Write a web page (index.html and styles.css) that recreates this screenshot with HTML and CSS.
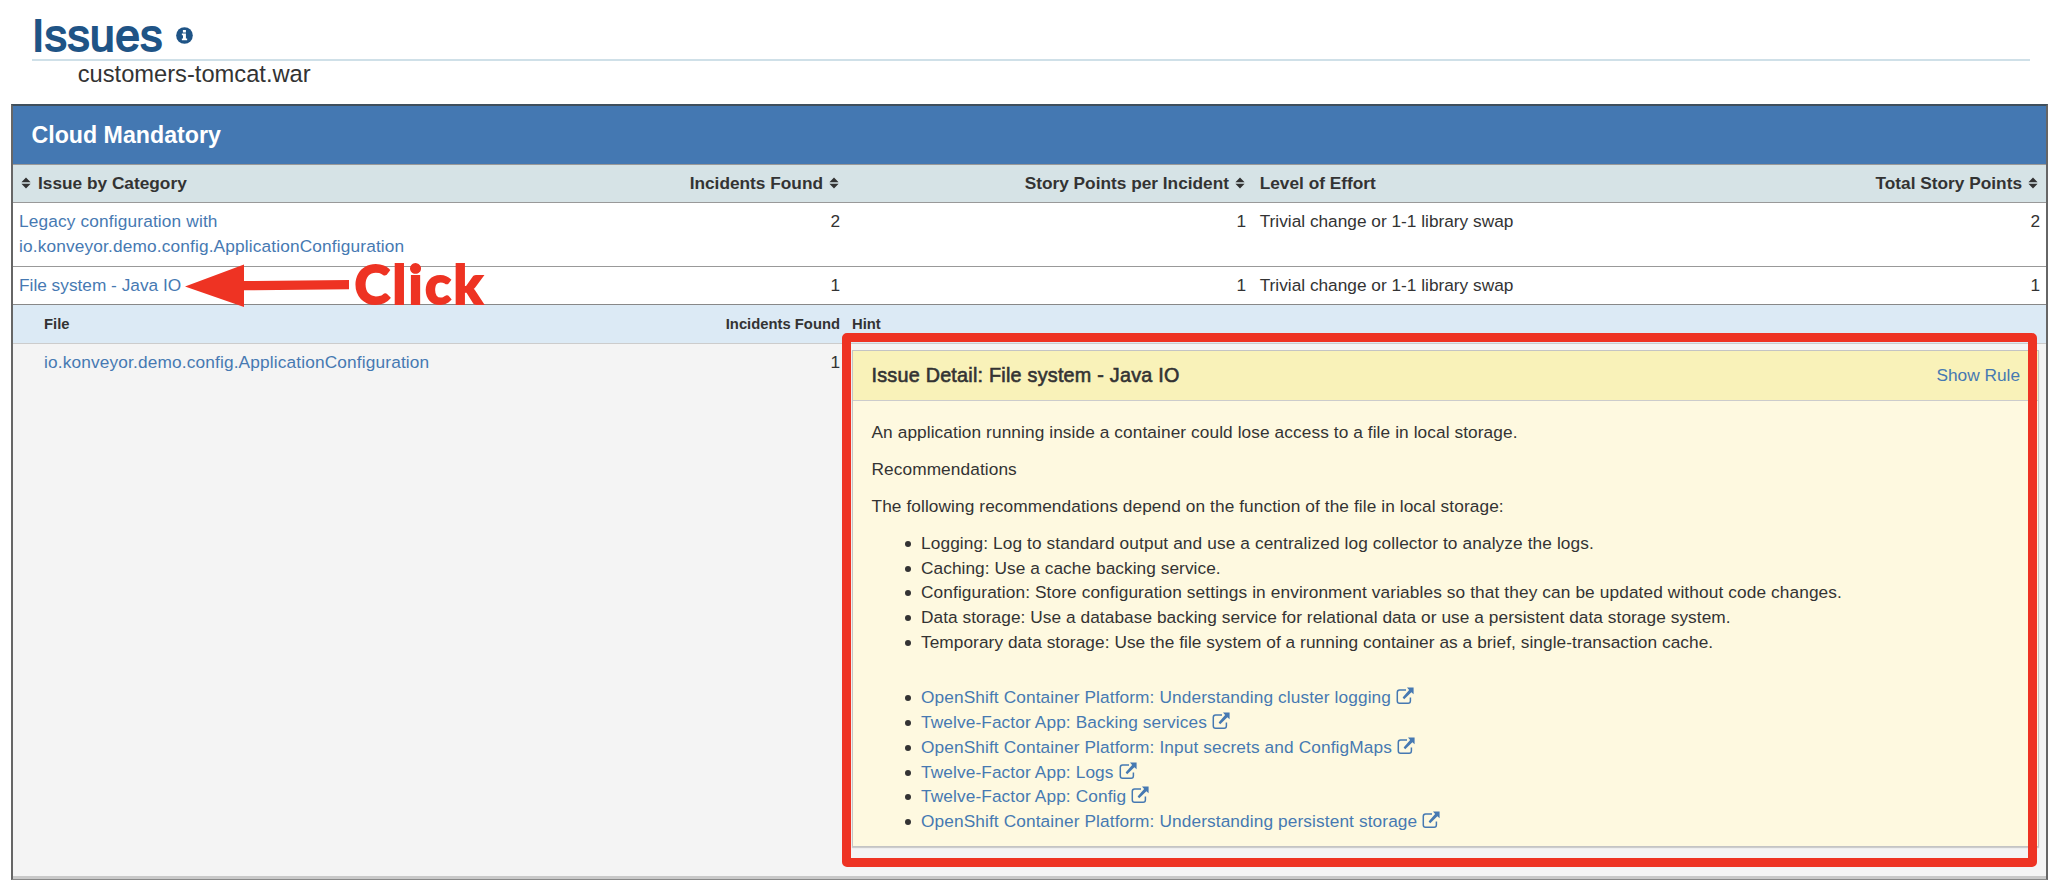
FILE: index.html
```
<!DOCTYPE html>
<html lang="en">
<head>
<meta charset="utf-8">
<title>Issues</title>
<link rel="stylesheet" href="styles.css">
</head>
<body>
<svg class="defs" aria-hidden="true">
  <symbol id="ext" viewBox="0 0 18 18"><path d="M10 2.9H3.6Q1.3 2.9 1.3 5.2V14Q1.3 16.3 3.6 16.3H12.1Q14.4 16.3 14.4 14V10.6" fill="none" stroke="currentColor" stroke-width="1.5"/><path d="M11 0.5H17.6V7.3L15.4 5.2L8.2 12.2L6.6 10.6L13.1 2.9Z" fill="currentColor"/></symbol>
  <symbol id="sort" viewBox="0 0 10 12"><path d="M5 .6L9.6 5.3H.4ZM5 11.4L9.6 6.7H.4Z" fill="currentColor"/></symbol>
</svg>
<header class="page-header">
  <h1 class="title">Issues</h1>
  <svg class="info" viewBox="0 0 18 18"><circle cx="9" cy="9" r="8.8" fill="#1f5486"/><path d="M7.3 3.2H10.5V5.7H7.3ZM6.2 7H10.5V12.2H11.8V14H6.2V12.2H7.4V8.8H6.2Z" fill="#fff"/></svg>
</header>
<div class="app-name">customers-tomcat.war</div>
<main class="issues">
  <h2 class="banner">Cloud Mandatory</h2>
  <div class="row head">
    <div class="cell first"><svg class="sort"><use href="#sort"/></svg><span>Issue by Category</span></div>
    <div class="cell num"><span>Incidents Found</span><svg class="sort"><use href="#sort"/></svg></div>
    <div class="cell num"><span>Story Points per Incident</span><svg class="sort"><use href="#sort"/></svg></div>
    <div class="cell effort"><span>Level of Effort</span></div>
    <div class="cell num"><span>Total Story Points</span><svg class="sort"><use href="#sort"/></svg></div>
  </div>
  <div class="row tall">
    <div class="cell"><a class="wide">Legacy configuration with<br>io.konveyor.demo.config.ApplicationConfiguration</a></div>
    <div class="cell num">2</div>
    <div class="cell num">1</div>
    <div class="cell effort">Trivial change or 1-1 library swap</div>
    <div class="cell num">2</div>
  </div>
  <div class="row short">
    <div class="cell"><a>File system - Java IO</a></div>
    <div class="cell num">1</div>
    <div class="cell num">1</div>
    <div class="cell effort">Trivial change or 1-1 library swap</div>
    <div class="cell num">1</div>
  </div>
  <div class="sub subhead">
    <div>File</div><div class="num">Incidents Found</div><div class="hint">Hint</div>
  </div>
  <div class="sub detail">
    <div><a class="wide">io.konveyor.demo.config.ApplicationConfiguration</a></div>
    <div class="num">1</div>
    <section class="panel">
      <div class="panel-head"><h3>Issue Detail: File system - Java IO</h3><a>Show Rule</a></div>
      <div class="panel-body">
        <p>An application running inside a container could lose access to a file in local storage.</p>
        <p>Recommendations</p>
        <p>The following recommendations depend on the function of the file in local storage:</p>
        <ul>
          <li class="loose">Logging: Log to standard output and use a centralized log collector to analyze the logs.</li>
          <li>Caching: Use a cache backing service.</li>
          <li class="loose">Configuration: Store configuration settings in environment variables so that they can be updated without code changes.</li>
          <li>Data storage: Use a database backing service for relational data or use a persistent data storage system.</li>
          <li>Temporary data storage: Use the file system of a running container as a brief, single-transaction cache.</li>
        </ul>
        <ul class="links">
          <li><a>OpenShift Container Platform: Understanding cluster logging<svg class="ext"><use href="#ext"/></svg></a></li>
          <li><a>Twelve-Factor App: Backing services<svg class="ext"><use href="#ext"/></svg></a></li>
          <li><a>OpenShift Container Platform: Input secrets and ConfigMaps<svg class="ext"><use href="#ext"/></svg></a></li>
          <li><a>Twelve-Factor App: Logs<svg class="ext"><use href="#ext"/></svg></a></li>
          <li><a>Twelve-Factor App: Config<svg class="ext"><use href="#ext"/></svg></a></li>
          <li><a>OpenShift Container Platform: Understanding persistent storage<svg class="ext"><use href="#ext"/></svg></a></li>
        </ul>
      </div>
    </section>
  </div>
</main>
<svg class="arrow" viewBox="0 0 166 44"><path d="M0 22.5L59 .5V17L164 16V25.3L59 26.3V43Z" fill="#ee3323"/></svg>
<div class="click">Click</div>
<div class="highlight"></div>
</body>
</html>
```
FILE: styles.css
```
* { box-sizing: border-box; }
body { margin: 0; width: 2064px; height: 888px; position: relative; overflow: hidden; background: #fff; color: #333; font: 17.28px/24.69px "Liberation Sans", Arial, sans-serif; }
h1, h2, h3, p, ul { margin: 0; padding: 0; }
a { color: #4679b2; }
.wide { letter-spacing: .15px; }
.defs { position: absolute; width: 0; height: 0; }
.page-header { margin: 0 34px 0 32px; height: 60.5px; border-bottom: 2px solid #cfe0e8; display: flex; padding-top: 11px; }
.title { color: #1f5486; font-size: 44.4px; line-height: 49px; font-weight: 400; letter-spacing: .45px; -webkit-text-stroke: 1.8px #1f5486; }
.info { width: 17px; height: 17px; margin: 16px 0 0 13px; }
.app-name { height: 43px; padding-left: 77.7px; font-size: 23.7px; line-height: 26px; }
.issues { margin-left: 11px; width: 2037px; height: 776.5px; border: 2px solid #666; border-top-color: #3f4f5c; border-bottom: 1px solid #888; box-shadow: inset 0 -2px #c8c8c8; }
.banner { height: 58px; padding-left: 18.5px; background: #4478b2; color: #fff; font-size: 23.2px; line-height: 58px; }
.row { display: grid; grid-template-columns: 422px 406px 406px 390px 409px; border-top: 1px solid #999; }
.cell { padding: 6.5px 0 0 6px; white-space: nowrap; }
.cell.num { padding-right: 1px; }
.num { text-align: right; }
.cell.effort { padding-left: 12.7px; }
.head { height: 38px; background: #d6e3e6; font-weight: 700; }
.sort { width: 10px; height: 12px; margin-left: 6px; }
.head .num { padding-right: 2px; }
.cell.num:last-child { padding-right: 6px; }
.head .num:last-child { padding-right: 8px; }
.first .sort { margin: 0 7px 0 2px; }
.tall { height: 64px; }
.short { height: 38px; }
.sub { display: grid; grid-template-columns: 400px 396px 12px 1187px; padding-left: 31px; }
.subhead { height: 39px; border-top: 1px solid #888; background: #dceaf5; font-size: 14.8px; font-weight: 700; line-height: 39px; }
.hint { grid-column: 4; }
.detail { height: 535px; border-top: 1px solid #ccc; background: #f4f4f4; padding-top: 6px; box-shadow: inset 0 -2px #c8c8c8; }
.panel { grid-column: 4; height: 497px; border: 1px solid #c4c4c4; background: #fef9e0; box-shadow: 0 1px 1px #ccc; }
.panel-head { height: 50px; display: flex; justify-content: space-between; padding: 0 18px 0 18.5px; line-height: 49px; background: #f9f2b9; border-bottom: 1px solid #ccc; }
.panel-head h3 { font-size: 19.75px; line-height: 48px; font-weight: 400; letter-spacing: .24px; -webkit-text-stroke: .6px #333; }
.panel-body { padding: 19.5px 18.5px; white-space: nowrap; letter-spacing: .09px; }
p { margin-bottom: 12.34px; }
ul { padding-left: 49.5px; list-style: none; }
li { position: relative; height: 24.69px; letter-spacing: .06px; }
.loose, .links li { letter-spacing: .11px; }
li::before { content: ""; position: absolute; left: -16px; top: 10px; width: 6px; height: 6px; border-radius: 50%; background: #333; }
.links { margin-top: 31px; }
.ext { width: 18px; height: 18px; margin-left: 5px; vertical-align: -2px; }
.arrow { position: absolute; left: 185px; top: 264px; width: 166px; height: 44px; }
.click { position: absolute; left: 354.5px; top: 254px; font: 900 54px/60px Lato, sans-serif; letter-spacing: 2.4px; -webkit-text-stroke: 1.8px #ee3323; color: #ee3323; }
.highlight { position: absolute; left: 842px; top: 333px; width: 1195px; height: 534px; border: 9px solid #ee3323; border-radius: 5px; }
```
